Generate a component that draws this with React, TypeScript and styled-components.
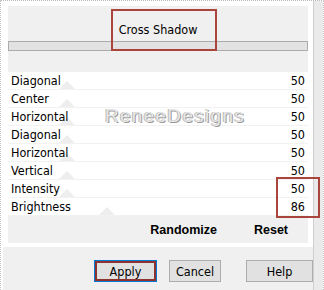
import React, { ReactElement } from 'react';
import styled, { createGlobalStyle } from 'styled-components';

const GlobalStyle = createGlobalStyle`
  html, body {
    margin: 0;
    padding: 0;
    background: #ffffff;
  }
`;

const FONT = `"Liberation Sans Narrow", "DejaVu Sans Condensed", "Liberation Sans", Arial, sans-serif`;

// 전체 창
const Frame = styled.div`
  position: relative;
  display: flex;
  width: 324px;
  height: 290px;
  box-sizing: border-box;
  border-top: 1px dotted #b8b8b8;
  border-left: 1px dotted #c4c4c4;
  border-right: 1px dotted #c4c4c4;
  overflow: hidden;
  font-family: ${FONT};
  color: #000000;
`;

const MainColumn = styled.div`
  display: flex;
  flex-direction: column;
  width: 312px;
  flex-shrink: 0;
`;

const TopArea = styled.div`
  padding: 5px 5px 0 7px;
`;

const Panel = styled.div`
  position: relative;
  display: flex;
  flex-direction: column;
  height: 237px;
  background: #f0f0f0;
`;

const Header = styled.div`
  display: flex;
  height: 35px;
  align-items: flex-end;
  justify-content: center;
  padding-bottom: 4px;
  box-sizing: border-box;
  font-size: 12.5px;
`;

const Bar = styled.div`
  height: 10px;
  box-sizing: border-box;
  border: 1px solid #acacac;
  background: #e2e2e2;
`;

const List = styled.div`
  display: flex;
  flex-direction: column;
  margin-top: 21px;
  background: #ffffff;
  position: relative;
`;

const Row = styled.div`
  position: relative;
  display: flex;
  height: 18px;
  align-items: center;
  justify-content: space-between;
  padding: 0 3px 0 3px;
  box-sizing: border-box;
  border-bottom: 1px solid #f2f2f2;
  font-size: 12.5px;
`;

const Label = styled.span`
  position: relative;
  z-index: 1;
`;

const Value = styled.span`
  position: relative;
  z-index: 1;
`;

// 슬라이더 손잡이 (흐릿한 삼각형)
const Thumb = styled.div<{ $pos: number }>`
  position: absolute;
  bottom: 0;
  left: ${p => p.$pos}px;
  width: 0;
  height: 0;
  border-left: 8px solid transparent;
  border-right: 8px solid transparent;
  border-bottom: 8px solid #eeeeee;
`;

const Watermark = styled.div`
  position: absolute;
  left: 0;
  right: 0;
  top: 33px;
  text-align: center;
  padding-left: 34px;
  font-family: "Liberation Sans", Arial, sans-serif;
  font-size: 19px;
  letter-spacing: 1.3px;
  color: #e6e6e6;
  text-shadow: 1px 1px 0 #9a9a9a, -1px 0 0 #b8b8b8;
  z-index: 2;
`;

const ActionRow = styled.div`
  display: flex;
  flex: 1;
  align-items: center;
  justify-content: flex-end;
  gap: 37px;
  padding-right: 20px;
  font-family: "Liberation Sans", Arial, sans-serif;
  font-weight: bold;
  font-size: 12.5px;
`;

const Gap = styled.div`
  height: 4px;
`;

const ButtonBar = styled.div`
  display: flex;
  flex: 1;
  align-items: flex-start;
  padding: 13px 0 0 91px;
  background: #f0f0f0;
  margin-left: 2px;
`;

const Button = styled.div<{ $w: number; $ml: number; $primary?: boolean }>`
  display: flex;
  align-items: center;
  justify-content: center;
  width: ${p => p.$w}px;
  height: 22px;
  margin-left: ${p => p.$ml}px;
  box-sizing: border-box;
  border: 1px solid ${p => (p.$primary ? '#0078d7' : '#adadad')};
  box-shadow: ${p => (p.$primary ? 'inset 0 0 0 2px #8e3430' : 'none')};
  background: #e1e1e1;
  font-size: 12.5px;
  flex-shrink: 0;
`;

const ScrollStrip = styled.div`
  flex: 1;
  border-left: 1px solid #cfcfcf;
  background: #eaeaea;
`;

// 빨간 강조 표시
const Mark = styled.div<{ $l: number; $t: number; $w: number; $h: number }>`
  position: absolute;
  left: ${p => p.$l}px;
  top: ${p => p.$t}px;
  width: ${p => p.$w}px;
  height: ${p => p.$h}px;
  box-sizing: border-box;
  border: 2px solid #a9453b;
  z-index: 3;
`;

const rows = [
  { label: 'Diagonal', value: 50, pos: 51 },
  { label: 'Center', value: 50, pos: 51 },
  { label: 'Horizontal', value: 50, pos: 51 },
  { label: 'Diagonal', value: 50, pos: 51 },
  { label: 'Horizontal', value: 50, pos: 51 },
  { label: 'Vertical', value: 50, pos: 51 },
  { label: 'Intensity', value: 50, pos: 51 },
  { label: 'Brightness', value: 86, pos: 91 },
];

function App(): ReactElement {
  return (
    <Frame>
      <GlobalStyle />

      <MainColumn>
        <TopArea>
          <Panel>
            <Header>Cross Shadow</Header>
            <Bar />
            <List>
              {rows.map((r, i) => (
                <Row key={i}>
                  <Thumb $pos={r.pos} />
                  <Label>{r.label}</Label>
                  <Value>{r.value}</Value>
                </Row>
              ))}
              <Watermark>ReneeDesigns</Watermark>
            </List>
            <ActionRow>
              <span>Randomize</span>
              <span>Reset</span>
            </ActionRow>
          </Panel>
        </TopArea>

        <Gap />

        <ButtonBar>
          <Button $w={63} $ml={0} $primary>Apply</Button>
          <Button $w={52} $ml={12}>Cancel</Button>
          <Button $w={67} $ml={25}>Help</Button>
        </ButtonBar>
      </MainColumn>

      <ScrollStrip />

      <Mark $l={110} $t={8} $w={106} $h={42} />
      <Mark $l={275} $t={176} $w={44} $h={41} />
    </Frame>
  );
}

export default App;
